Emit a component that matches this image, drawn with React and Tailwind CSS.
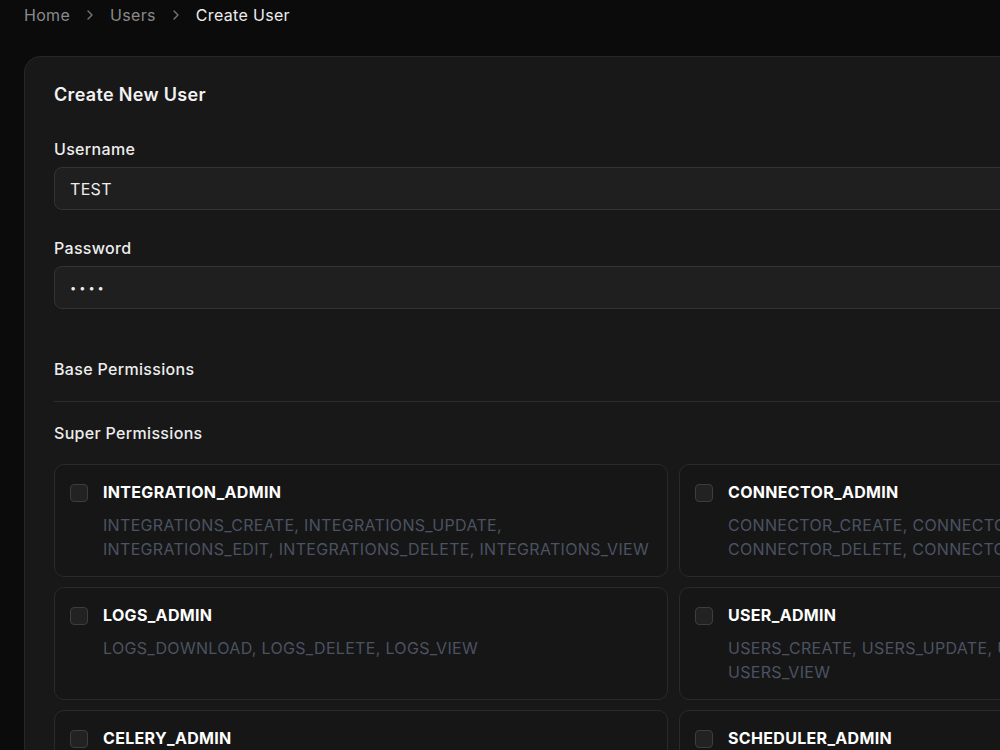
import React, { useState } from 'react';
import { ChevronRight } from 'lucide-react';

const superPermissions = [
  {
    name: 'INTEGRATION_ADMIN',
    perms: 'INTEGRATIONS_CREATE, INTEGRATIONS_UPDATE, INTEGRATIONS_EDIT, INTEGRATIONS_DELETE, INTEGRATIONS_VIEW',
  },
  {
    name: 'CONNECTOR_ADMIN',
    perms: 'CONNECTOR_CREATE, CONNECTOR_UPDATE, CONNECTOR_DELETE, CONNECTOR_VIEW',
  },
  { name: 'LOGS_ADMIN', perms: 'LOGS_DOWNLOAD, LOGS_DELETE, LOGS_VIEW' },
  { name: 'USER_ADMIN', perms: 'USERS_CREATE, USERS_UPDATE, USERS_EDIT, USERS_DELETE, USERS_VIEW' },
  { name: 'CELERY_ADMIN', perms: 'CELERY_VIEW, CELERY_RESTART' },
  { name: 'SCHEDULER_ADMIN', perms: 'SCHEDULER_CREATE, SCHEDULER_UPDATE, SCHEDULER_VIEW' },
];

const PermissionCard = ({ name, perms, checked, onToggle }) => (
  <label className="flex gap-[15px] rounded-[10px] border border-[#2a2a2a] bg-[#161616] p-[15px] cursor-pointer">
    <input type="checkbox" checked={checked} onChange={onToggle} className="hidden" />
    <span className="mt-[4px] h-[18px] w-[18px] shrink-0 rounded-[4px] border border-[#3d3d3d] bg-[#222222]"></span>
    <div className="flex flex-col gap-[9px]">
      <span className="text-[16px] leading-6 font-bold text-white">{name}</span>
      <span className="text-[16px] leading-6 text-[#4b5262]">{perms}</span>
    </div>
  </label>
);

export default function App() {
  const [username, setUsername] = useState('TEST');
  const [password, setPassword] = useState('test');
  const [selected, setSelected] = useState({});

  const toggle = (name) => setSelected((s) => ({ ...s, [name]: !s[name] }));

  return (
    <div className="min-h-screen w-full overflow-hidden bg-[#0b0b0b] font-['Inter',sans-serif] tracking-[0.02em]">
      <div className="w-[1323px]">
        {/* Breadcrumb */}
        <nav className="flex items-center gap-3 px-6 pt-[3px] text-[16px] leading-6">
          <span className="text-[#8a8a8a]">Home</span>
          <ChevronRight size={16} className="text-[#777777]" />
          <span className="text-[#8a8a8a]">Users</span>
          <ChevronRight size={16} className="text-[#777777]" />
          <span className="text-[#ededed]">Create User</span>
        </nav>

        {/* Form card */}
        <div className="ml-6 mt-[29px] rounded-[16px] border border-[#262626] bg-[#181818] px-[29px] pt-[24px] pb-8">
          <h1 className="text-[18px] leading-7 font-semibold text-[#f2f2f2]">Create New User</h1>

          <div className="mt-[28px] flex flex-col gap-[6px]">
            <label className="text-[16px] leading-6 font-medium text-[#ededed]">Username</label>
            <input
              value={username}
              onChange={(e) => setUsername(e.target.value)}
              className="h-[43px] w-full rounded-[8px] border border-[#333333] bg-[#1f1f1f] px-[15px] text-[16px] text-[#ededed] tracking-[0.02em] outline-none"
            />
          </div>

          <div className="mt-[26px] flex flex-col gap-[6px]">
            <label className="text-[16px] leading-6 font-medium text-[#ededed]">Password</label>
            <input
              type="password"
              value={password}
              onChange={(e) => setPassword(e.target.value)}
              className="h-[43px] w-full rounded-[8px] border border-[#333333] bg-[#1f1f1f] px-[15px] text-[11px] text-[#ededed] tracking-[3px] outline-none"
            />
          </div>

          <h2 className="mt-[48px] text-[16px] leading-6 font-medium text-[#ededed]">Base Permissions</h2>
          <div className="mt-[20px] h-px bg-[#2c2c2c]"></div>

          <h2 className="mt-[19px] text-[16px] leading-6 font-medium text-[#ededed]">Super Permissions</h2>
          <div className="mt-[19px] grid grid-cols-2 gap-x-[11px] gap-y-[10px]">
            {superPermissions.map((p) => (
              <PermissionCard
                key={p.name}
                name={p.name}
                perms={p.perms}
                checked={!!selected[p.name]}
                onToggle={() => toggle(p.name)}
              />
            ))}
          </div>
        </div>
      </div>
    </div>
  );
}
